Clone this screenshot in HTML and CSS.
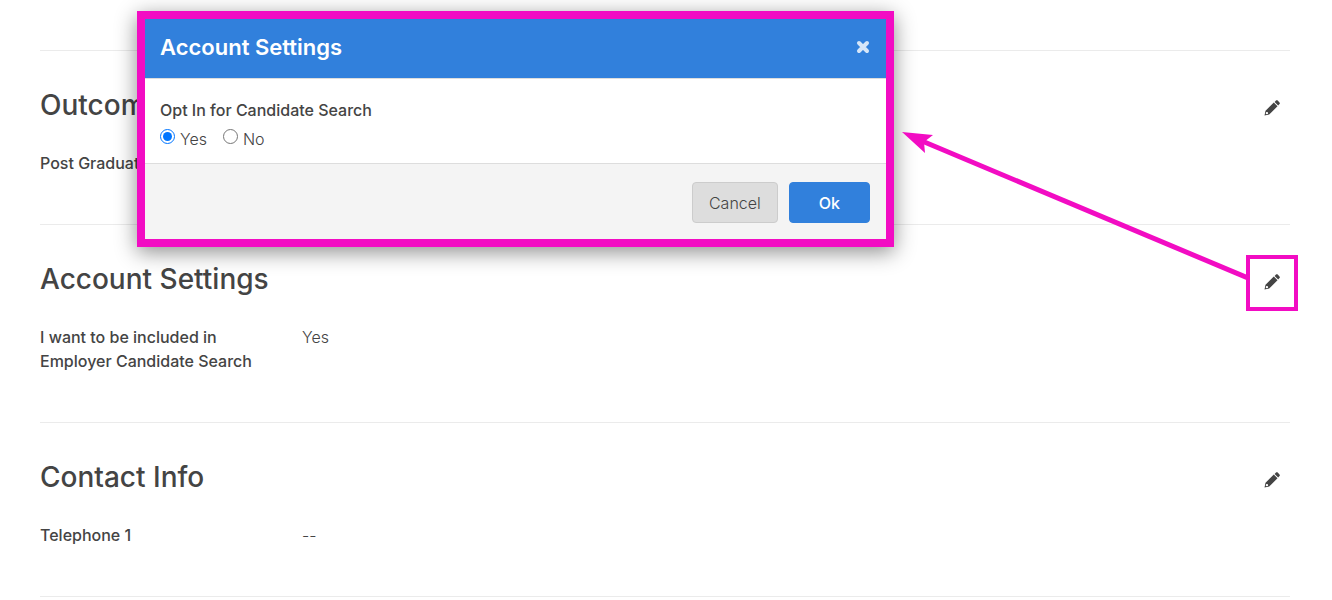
FILE: index.html
```html
<!DOCTYPE html>
<html lang="en">
  <head>
    <meta charset="utf-8" />
    <title>Account Settings</title>
    <meta name="viewport" content="width=device-width, initial-scale=1" />
    <link rel="stylesheet" href="styles.css">
  </head>
  <body>
    <svg class="sprite" aria-hidden="true">
      <symbol id="pencil" viewBox="0 0 16 16">
        <path d="M10.6 1.9 12 .6c.5-.5 1.2-.5 1.7 0l1.8 1.8c.5.5.5 1.2 0 1.7l-1.3 1.4z" />
        <path fill-rule="evenodd" d="M9.8 2.5 13.5 6.2 5.2 14.5.5 15.5 1.5 10.8zM2.3 11.9l-.6 1.6.8.8 1.6-.6-.2-1.4-1.3-.2z" />
      </symbol>
    </svg>
    <main>
      <section class="profile-section">
        <header class="section-header">
          <h2>Outcomes</h2>
          <button type="button" class="edit" aria-label="Edit Outcomes">
            <svg><use href="#pencil" /></svg>
          </button>
        </header>
        <dl>
          <dt>Post Graduation</dt>
          <dd></dd>
        </dl>
      </section>
      <section class="profile-section">
        <header class="section-header">
          <h2>Account Settings</h2>
          <button type="button" class="edit highlighted" aria-label="Edit Account Settings">
            <svg><use href="#pencil" /></svg>
          </button>
        </header>
        <dl>
          <dt>I want to be included in Employer Candidate Search</dt>
          <dd>Yes</dd>
        </dl>
      </section>
      <section class="profile-section">
        <header class="section-header">
          <h2>Contact Info</h2>
          <button type="button" class="edit" aria-label="Edit Contact Info">
            <svg><use href="#pencil" /></svg>
          </button>
        </header>
        <dl>
          <dt>Telephone 1</dt>
          <dd>--</dd>
        </dl>
      </section>
    </main>

    <form class="modal" role="dialog" aria-labelledby="modal-title">
      <header class="modal-header">
        <h3 id="modal-title">Account Settings</h3>
        <button type="button" class="close" aria-label="Close">
          <svg viewBox="0 0 14 14"><path d="M3 3l8 8M11 3l-8 8" /></svg>
        </button>
      </header>
      <fieldset class="modal-body">
        <legend>Opt In for Candidate Search</legend>
        <div class="options">
          <input type="radio" name="opt-in" id="opt-yes" checked />
          <label for="opt-yes">Yes</label>
          <input type="radio" name="opt-in" id="opt-no" />
          <label for="opt-no">No</label>
        </div>
      </fieldset>
      <footer class="modal-footer">
        <button type="button" class="btn">Cancel</button>
        <button type="submit" class="btn btn-primary">Ok</button>
      </footer>
    </form>

    <svg class="arrow" viewBox="0 0 346 148" aria-hidden="true">
      <path class="shaft" d="M20 9 346 146" />
      <path class="head" d="M0 0 31 3 22 10 23 21z" />
    </svg>
  </body>
</html>
```
FILE: styles.css
```css
* {
  box-sizing: border-box;
}
body {
  position: relative;
  margin: 0;
  padding: 50px 42px 0 40px;
  background-color: #fff;
  color: #444;
  font-family: Inter, "Liberation Sans", sans-serif;
  font-size: 16px;
  line-height: 24px;
}
h2,
h3,
dl,
dd {
  margin: 0;
}
button {
  font: inherit;
  color: inherit;
  cursor: pointer;
}
.sprite {
  position: absolute;
  width: 0;
  height: 0;
}
main {
  border-bottom: 1px solid #ebebeb;
}
.profile-section {
  border-top: 1px solid #ebebeb;
  padding: 36px 0 49px;
}
.section-header {
  display: flex;
  justify-content: space-between;
  margin-bottom: 28px;
}
.section-header h2 {
  font-size: 28px;
  font-weight: 500;
  line-height: 36px;
}
.edit {
  position: relative;
  display: flex;
  align-items: end;
  justify-content: center;
  width: 36px;
  height: 29px;
  padding: 0;
  border: 0;
  background: none;
}
.edit svg {
  width: 16px;
  height: 16px;
  fill: #444;
}
.highlighted::after {
  content: "";
  position: absolute;
  inset: -6px -8px -21px;
  border: 4px solid #f20cc3;
}
dl {
  display: grid;
  grid-template-columns: 222px 1fr;
  column-gap: 40px;
}
dt {
  font-weight: 500;
}
dd {
  font-weight: 300;
}

.modal {
  position: absolute;
  top: 11px;
  left: 137px;
  right: 438px;
  border: 8px solid #f20cc3;
  background-color: #fff;
  box-shadow: 0 5px 20px rgba(0, 0, 0, 0.45);
}
.modal-header {
  display: flex;
  align-items: center;
  justify-content: space-between;
  padding: 13px 16px 16px 15px;
  border-bottom: 1px solid #ddd;
  background-color: #3180dc;
  background-clip: padding-box;
  color: #fff;
}
.modal-header h3 {
  font-size: 22px;
  font-weight: 600;
  line-height: 30px;
}
.close {
  display: flex;
  padding: 0;
  border: 0;
  background: none;
}
.close svg {
  width: 14px;
  height: 14px;
  fill: none;
  stroke: #d6e6f8;
  stroke-width: 4;
  stroke-linecap: round;
}
.modal-body {
  margin: 0;
  padding: 19px 15px 12px;
  border: 0;
}
.modal-body legend {
  float: left;
  width: 100%;
  padding: 0;
  font-weight: 500;
}
.options {
  clear: both;
  display: flex;
  padding-top: 5px;
  font-weight: 300;
}
.options input {
  width: 15px;
  height: 15px;
  margin: 2px 5px 0 0;
}
.options label {
  margin-right: 16px;
}
.modal-footer {
  display: flex;
  justify-content: flex-end;
  gap: 11px;
  padding: 18px 16px 16px;
  border-top: 1px solid #ddd;
  background-color: #f4f4f4;
}
.btn {
  padding: 8px 16px 7px;
  border: 1px solid #ccc;
  border-radius: 4px;
  background-color: #ddd;
  font-weight: 300;
}
.btn-primary {
  padding: 8px 29px 7px;
  border-color: #3180dc;
  background-color: #3180dc;
  color: #fff;
  font-weight: 500;
}

.arrow {
  position: absolute;
  top: 132px;
  right: 84px;
  width: 346px;
  height: 148px;
  pointer-events: none;
}
.arrow .shaft {
  stroke: #f20cc3;
  stroke-width: 5;
}
.arrow .head {
  fill: #f20cc3;
}
```
